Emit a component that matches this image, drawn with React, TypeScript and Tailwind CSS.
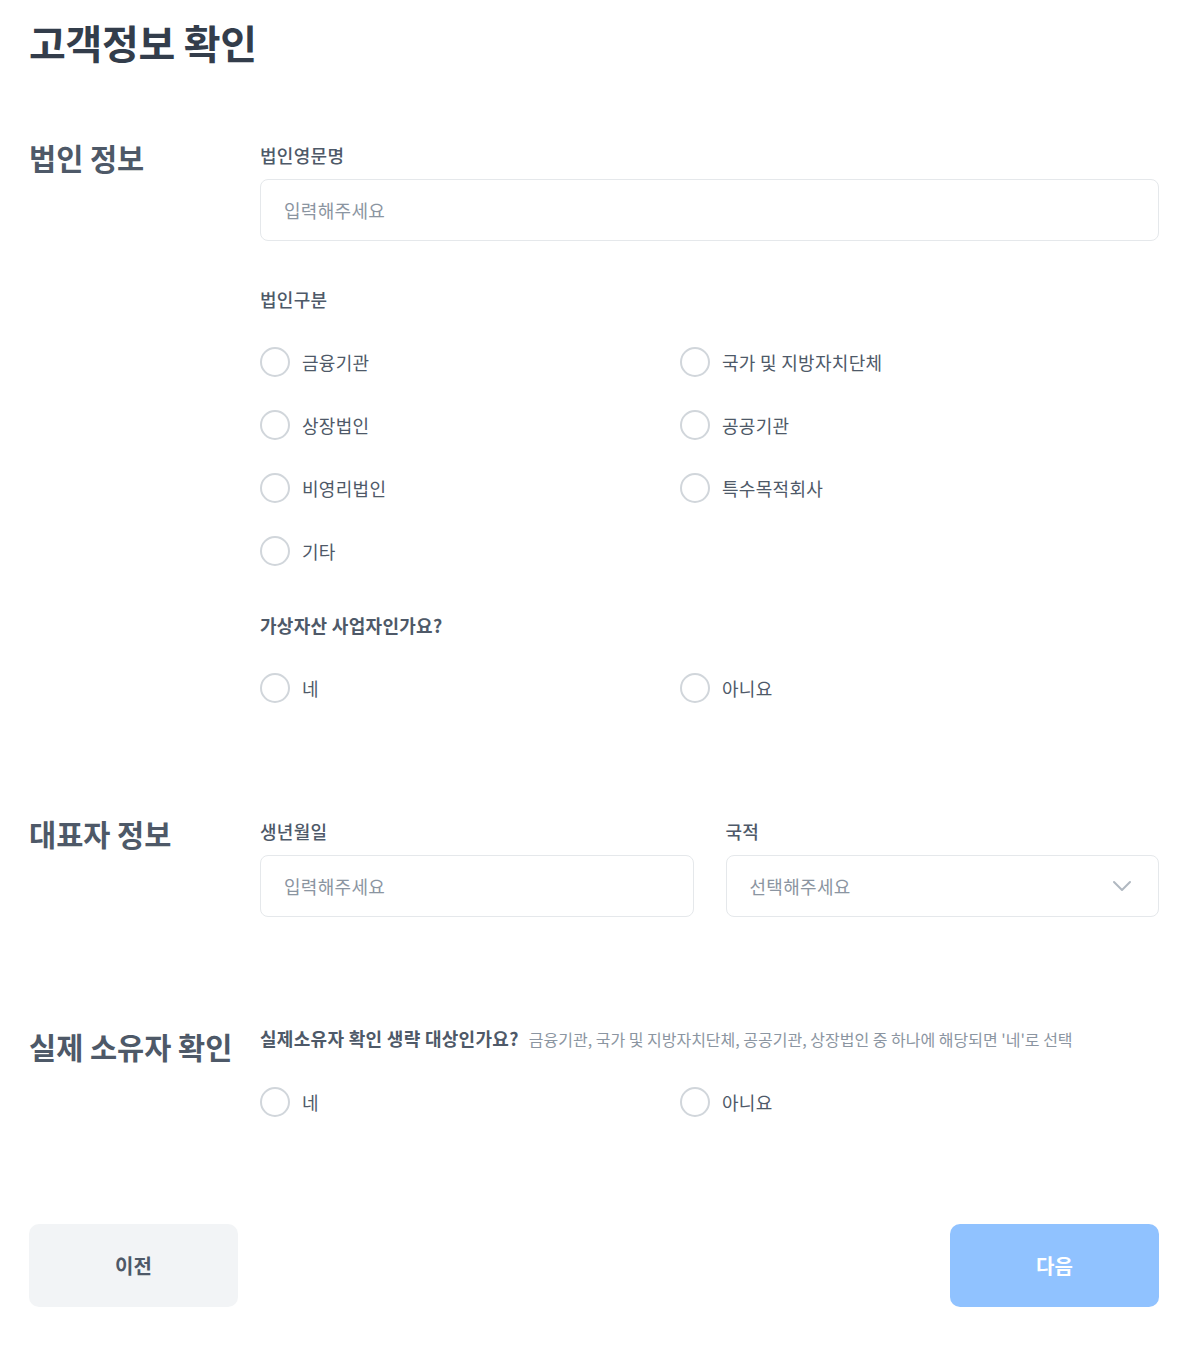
import React from "react";

const font = { fontFamily: '"Noto Sans CJK KR", "Noto Sans", sans-serif' };

function Radio({ label }: { label: string }) {
  return (
    <label className="flex items-center h-[30px] cursor-pointer">
      <span className="w-[30px] h-[30px] rounded-full border-2 border-[#d1d6db] bg-white shrink-0" />
      <span className="ml-[12px] text-[18px] tracking-[0.3px] leading-[30px] text-[#4e5968]">{label}</span>
    </label>
  );
}

function Label({ children, bold }: { children: React.ReactNode; bold?: boolean }) {
  return (
    <div
      className={`text-[18px] tracking-[0.3px] leading-[24px] whitespace-nowrap ${
        bold ? "font-bold text-[#4e5968]" : "font-medium text-[#4e5968]"
      }`}
    >
      {children}
    </div>
  );
}

function Input({ placeholder }: { placeholder: string }) {
  return (
    <div className="h-[62px] rounded-[8px] border border-[#e5e8eb] bg-white flex items-center px-[23px]">
      <span className="text-[18px] tracking-[0.3px] text-[#8b95a1]">{placeholder}</span>
    </div>
  );
}

export default function App() {
  return (
    <div className="min-h-[1366px] bg-white pl-[29px] pr-[38px] pt-[21px]" style={font}>
      <h1 className="text-[40px] leading-[42px] font-bold text-[#333d4b] tracking-[-0.3px]">고객정보 확인</h1>

      {/* 법인 정보 */}
      <section className="flex mt-[80px]">
        <h2 className="w-[231px] shrink-0 text-[29.5px] leading-[28px] font-bold text-[#4e5968]">법인 정보</h2>
        <div className="flex-1 flex flex-col">
          <Label>법인영문명</Label>
          <div className="mt-[12px]">
            <Input placeholder="입력해주세요" />
          </div>
          <div className="mt-[46px]">
            <Label>법인구분</Label>
          </div>
          <div className="mt-[36px] grid grid-cols-[420px_1fr] gap-y-[33px]">
            <Radio label="금융기관" />
            <Radio label="국가 및 지방자치단체" />
            <Radio label="상장법인" />
            <Radio label="공공기관" />
            <Radio label="비영리법인" />
            <Radio label="특수목적회사" />
            <Radio label="기타" />
          </div>
          <div className="mt-[47px]">
            <Label bold>가상자산 사업자인가요?</Label>
          </div>
          <div className="mt-[36px] grid grid-cols-[420px_1fr]">
            <Radio label="네" />
            <Radio label="아니요" />
          </div>
        </div>
      </section>

      {/* 대표자 정보 */}
      <section className="flex mt-[116px]">
        <h2 className="w-[231px] shrink-0 text-[29.5px] leading-[28px] font-bold text-[#4e5968]">대표자 정보</h2>
        <div className="flex-1 grid grid-cols-2 gap-x-[32px]">
          <div>
            <Label>생년월일</Label>
            <div className="mt-[12px]">
              <Input placeholder="입력해주세요" />
            </div>
          </div>
          <div>
            <Label>국적</Label>
            <div className="mt-[12px] h-[62px] rounded-[8px] border border-[#e5e8eb] bg-white flex items-center justify-between pl-[23px] pr-[26px]">
              <span className="text-[18px] tracking-[0.3px] text-[#8b95a1]">선택해주세요</span>
              <svg width="20" height="12" viewBox="0 0 20 12" fill="none">
                <path d="M2 2l8 8 8-8" stroke="#b0b8c1" strokeWidth="2" strokeLinecap="round" strokeLinejoin="round" />
              </svg>
            </div>
          </div>
        </div>
      </section>

      {/* 실제 소유자 확인 */}
      <section className="flex mt-[109px]">
        <h2 className="w-[231px] shrink-0 mt-[6px] text-[29.5px] leading-[28px] font-bold text-[#4e5968] whitespace-nowrap">
          실제 소유자 확인
        </h2>
        <div className="flex-1 flex flex-col">
          <div className="flex items-baseline">
            <Label bold>실제소유자 확인 생략 대상인가요?</Label>
            <span className="ml-[10px] text-[16px] text-[#8b95a1] whitespace-nowrap">
              금융기관, 국가 및 지방자치단체, 공공기관, 상장법인 중 하나에 해당되면 '네'로 선택
            </span>
          </div>
          <div className="mt-[36px] grid grid-cols-[420px_1fr]">
            <Radio label="네" />
            <Radio label="아니요" />
          </div>
        </div>
      </section>

      <div className="flex justify-between mt-[107px]">
        <button className="w-[209px] h-[83px] rounded-[10px] bg-[#f2f4f6] text-[20px] font-bold text-[#4e5968]">이전</button>
        <button className="w-[209px] h-[83px] rounded-[10px] bg-[#90c2ff] text-[20px] font-bold text-white">다음</button>
      </div>
    </div>
  );
}
